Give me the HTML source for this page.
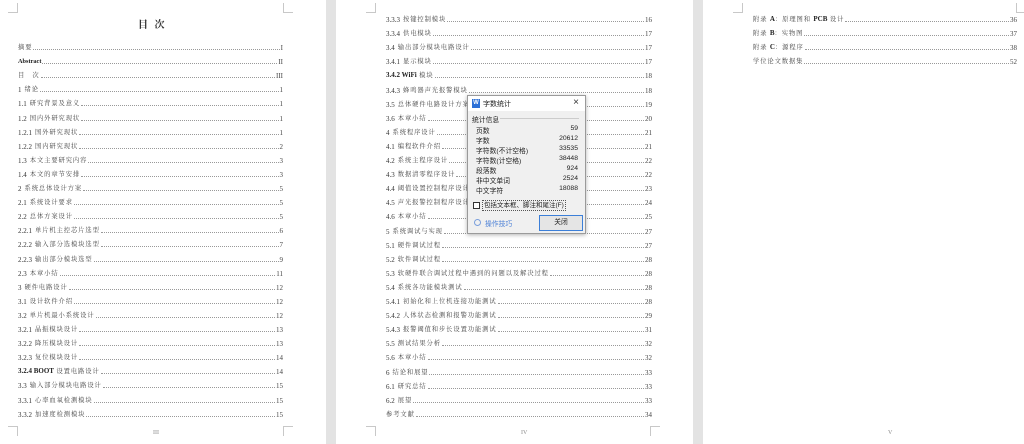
<!DOCTYPE html>
<html><head><meta charset="utf-8"><style>
*{margin:0;padding:0;box-sizing:border-box}
body{width:1024px;height:444px;overflow:hidden;background:#fff;position:relative;font-family:"Liberation Serif","Noto Serif CJK SC","Noto Sans CJK SC",serif;color:#444}
.gap{position:absolute;top:0;height:444px;background:#e3e3e3}
.row{position:absolute;height:9px;display:flex;align-items:flex-end;font-size:6.3px;line-height:8px;white-space:nowrap}
.row .t{letter-spacing:0.9px}
.row .p{font-size:7px;margin-right:3px;color:#333}
.row .d{flex:1;border-bottom:1px dotted #999;margin:0 1px 2px}
.row .n{font-size:7px}
.cm{position:absolute;border-color:#c8c8c8;border-style:solid;width:10px;height:10px}
.title{position:absolute;left:138px;top:16px;font-size:10px;font-weight:bold;color:#333;letter-spacing:2px}
.foot{position:absolute;font-size:6px;color:#888}
.dlg{position:absolute;left:467px;top:95px;width:119px;height:139px;background:#f0f0f0;border:1px solid #9a9a9a;box-shadow:0 1px 4px rgba(0,0,0,.3);font-family:"Liberation Sans","Noto Sans CJK SC",sans-serif;color:#222;font-size:6.5px}
.dlg .tb{height:15px;background:#fff;position:relative}
.dlg .w{position:absolute;left:4px;top:3px;width:8px;height:9px;background:#2b6fd6;color:#fff;font-size:6px;font-weight:bold;text-align:center;line-height:9px}
.dlg .tt{position:absolute;left:15px;top:3px;font-size:7px}
.dlg .x{position:absolute;right:6px;top:1px;font-size:10px;color:#333}
.dlg .g{position:absolute;left:4px;top:18px;font-size:6.8px}
.dlg .gl{position:absolute;left:32px;right:6px;top:22px;border-top:1px solid #ccc}
.dlg .r{position:absolute;left:8px;width:102px;display:flex;justify-content:space-between;font-size:6.8px}
</style></head><body>
<div class="gap" style="left:326px;width:10px"></div>
<div class="gap" style="left:693px;width:10px"></div>

<div class="cm" style="left:8px;top:3px;border-width:0 1px 1px 0"></div>
<div class="cm" style="left:283px;top:3px;border-width:0 0 1px 1px"></div>
<div class="cm" style="left:8px;top:426px;border-width:1px 1px 0 0"></div>
<div class="cm" style="left:283px;top:426px;border-width:1px 0 0 1px"></div>
<div class="cm" style="left:366px;top:3px;border-width:0 1px 1px 0"></div>
<div class="cm" style="left:366px;top:426px;border-width:1px 1px 0 0"></div>
<div class="cm" style="left:650px;top:426px;border-width:1px 0 0 1px"></div>
<div class="cm" style="left:733px;top:3px;border-width:0 1px 1px 0"></div>
<div class="cm" style="left:1016px;top:3px;border-width:0 0 1px 1px"></div>

<div class="title">目 次</div>
<div class="foot" style="left:153px;top:430px">III</div>
<div class="foot" style="left:521px;top:430px">IV</div>
<div class="foot" style="left:888px;top:430px">V</div>

<script>
function put(x,w,y0,step,items){let h='';items.forEach((it,i)=>{let s=it[0],m=s.match(/^([\d.]+) (.*)$/),lab=m?`<span class="p">${m[1]}</span><span class="t">${m[2]}</span>`:`<span class="t">${s}</span>`;h+=`<div class="row" style="left:${x}px;width:${w}px;top:${(y0+i*step-5).toFixed(1)}px">${lab}<span class="d"></span><span class="n">${it[1]}</span></div>`});document.body.insertAdjacentHTML('beforeend',h)}
put(18,265,48,14.1,[["摘要","I"],["<b style='color:#222;letter-spacing:0'>Abstract</b>","II"],["目　次","III"],["1 绪论","1"],["1.1 研究背景及意义","1"],["1.2 国内外研究现状","1"],["1.2.1 国外研究现状","1"],["1.2.2 国内研究现状","2"],["1.3 本文主要研究内容","3"],["1.4 本文的章节安排","3"],["2 系统总体设计方案","5"],["2.1 系统设计要求","5"],["2.2 总体方案设计","5"],["2.2.1 单片机主控芯片选型","6"],["2.2.2 输入部分选模块选型","7"],["2.2.3 输出部分模块选型","9"],["2.3 本章小结","11"],["3 硬件电路设计","12"],["3.1 设计软件介绍","12"],["3.2 单片机最小系统设计","12"],["3.2.1 晶振模块设计","13"],["3.2.2 降压模块设计","13"],["3.2.3 复位模块设计","14"],["<b style='color:#222;letter-spacing:0;font-size:7px'>3.2.4 BOOT</b> 设置电路设计","14"],["3.3 输入部分模块电路设计","15"],["3.3.1 心率血氧检测模块","15"],["3.3.2 加速度检测模块","15"]]);
put(386,266,20,14.1,[["3.3.3 按键控制模块","16"],["3.3.4 供电模块","17"],["3.4 输出部分模块电路设计","17"],["3.4.1 显示模块","17"],["<b style='color:#222;letter-spacing:0;font-size:7px'>3.4.2 WiFi</b> 模块","18"],["3.4.3 蜂鸣器声光报警模块","18"],["3.5 总体硬件电路设计方案","19"],["3.6 本章小结","20"],["4 系统程序设计","21"],["4.1 编程软件介绍","21"],["4.2 系统主程序设计","22"],["4.3 数据清零程序设计","22"],["4.4 阈值设置控制程序设计","23"],["4.5 声光报警控制程序设计","24"],["4.6 本章小结","25"],["5 系统调试与实现","27"],["5.1 硬件调试过程","27"],["5.2 软件调试过程","28"],["5.3 软硬件联合调试过程中遇到的问题以及解决过程","28"],["5.4 系统各功能模块测试","28"],["5.4.1 初始化和上位机连接功能测试","28"],["5.4.2 人体状态检测和报警功能测试","29"],["5.4.3 报警阈值和步长设置功能测试","31"],["5.5 测试结果分析","32"],["5.6 本章小结","32"],["6 结论和展望","33"],["6.1 研究总结","33"],["6.2 展望","33"],["参考文献","34"]]);
put(753,264,20,14,[["附录 <b style='color:#222;letter-spacing:0;font-size:7px'>A</b>：原理图和 <b style='color:#222;letter-spacing:0;font-size:7px'>PCB</b> 设计","36"],["附录 <b style='color:#222;letter-spacing:0;font-size:7px'>B</b>：实物图","37"],["附录 <b style='color:#222;letter-spacing:0;font-size:7px'>C</b>：源程序","38"],["学位论文数据集","52"]]);
</script>

<div class="dlg">
 <div class="tb"><div class="w">W</div><div class="tt">字数统计</div><div class="x">×</div></div>
 <div class="g">统计信息</div><div class="gl"></div>
 <div class="r" style="top:29px"><span>页数</span><span>59</span></div>
 <div class="r" style="top:39px"><span>字数</span><span>20612</span></div>
 <div class="r" style="top:49px"><span>字符数(不计空格)</span><span>33535</span></div>
 <div class="r" style="top:59px"><span>字符数(计空格)</span><span>38448</span></div>
 <div class="r" style="top:69px"><span>段落数</span><span>924</span></div>
 <div class="r" style="top:79px"><span>非中文单词</span><span>2524</span></div>
 <div class="r" style="top:89px"><span>中文字符</span><span>18088</span></div>
 <div style="position:absolute;left:5px;top:106px;width:7px;height:7px;border:1px solid #333;background:#fff"></div>
 <div style="position:absolute;left:14px;top:104px;border:1px dotted #555;padding:0 1px;font-size:6.5px;line-height:9px">包括文本框、脚注和尾注(F)</div>
 <div style="position:absolute;left:6px;top:123px;width:7px;height:7px;border:1px solid #7a9fdc;border-radius:50%"></div>
 <div style="position:absolute;left:17px;top:122px;color:#4a7fd6;font-size:6.8px">操作技巧</div>
 <div style="position:absolute;left:71px;top:119px;width:44px;height:16px;border:1px solid #3c7fd8;background:#e5e5e5;text-align:center;line-height:14px;font-size:6.8px">关闭</div>
</div>
</body></html>
